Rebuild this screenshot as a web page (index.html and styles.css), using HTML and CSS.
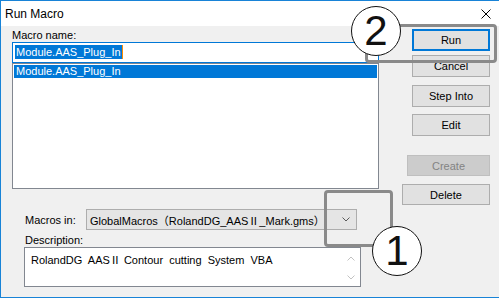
FILE: index.html
```html
<!DOCTYPE html>
<html lang="en">
<head>
    <meta charset="UTF-8">
    <meta name="viewport" content="width=device-width, initial-scale=1.0">
    <title>Run Macro</title>
    <link rel="stylesheet" href="styles.css">
</head>
<body>
    <div class="window">
        <div class="titlebar">
            <span class="title">Run Macro</span>
            <svg class="close" width="10" height="10" viewBox="0 0 10 10">
                <path d="M0.5 0.5 L9.5 9.5 M9.5 0.5 L0.5 9.5" stroke="#000" stroke-width="1" fill="none"/>
            </svg>
        </div>
        <div class="dialog">
            <div class="top">
                <div class="left">
                    <div class="label">Macro name:</div>
                    <div class="name-input"><span class="sel">Module.AAS_Plug_In</span><span class="caret"></span></div>
                    <div class="list">
                        <div class="item">Module.AAS_Plug_In</div>
                    </div>
                </div>
                <div class="buttons">
                    <button class="btn btn-run">Run</button>
                    <button class="btn btn-cancel">Cancel</button>
                    <button class="btn btn-step">Step Into</button>
                    <button class="btn btn-edit">Edit</button>
                    <button class="btn btn-create" disabled>Create</button>
                    <button class="btn btn-delete">Delete</button>
                </div>
            </div>
            <div class="bottom">
                <div class="macros-row">
                    <span class="macros-label">Macros in:</span>
                    <div class="combo">
                        <span class="combo-text">GlobalMacros（RolandDG_AASⅡ_Mark.gms）</span>
                        <svg class="combo-arrow" width="8" height="5" viewBox="0 0 8 5">
                            <path d="M0.5 0.5 L4 4 L7.5 0.5" stroke="#5a5a5a" fill="none"/>
                        </svg>
                    </div>
                </div>
                <div class="label desc-label">Description:</div>
                <div class="desc">
                    <div class="desc-text">RolandDG  AASⅡ Contour  cutting  System  VBA</div>
                    <div class="scroll">
                        <svg width="8" height="5" viewBox="0 0 8 5"><path d="M0.5 4.5 L4 1 L7.5 4.5" stroke="#c2c2c2" fill="none"/></svg>
                        <svg width="8" height="5" viewBox="0 0 8 5"><path d="M0.5 0.5 L4 4 L7.5 0.5" stroke="#c2c2c2" fill="none"/></svg>
                    </div>
                </div>
            </div>
        </div>

        <!-- annotation marks -->
        <div class="mark-box box-run"></div>
        <div class="mark-box box-combo"></div>
        <div class="circle circle-2">2</div>
        <div class="circle circle-1">1</div>
    </div>
</body>
</html>
```

FILE: styles.css
```css
body {
    margin: 0;
    font-family: "Liberation Sans", Arial, "Noto Sans CJK JP", sans-serif;
    font-size: 11px;
    color: #000;
    background: #fff;
}
.window {
    position: relative;
    width: 498px;
    height: 296px;
    border: 1px solid #1883d7;
    border-right: none;
}
.titlebar {
    height: 25px;
    background: #fff;
    display: flex;
    align-items: center;
    padding: 0 8px 0 4px;
    font-size: 12px;
}
.title {
    flex: 1;
}
.dialog {
    height: 271px;
    box-sizing: border-box;
    background: #f0f0f0;
    padding: 2px 9px 0 11px;
}
.top {
    display: flex;
}
.left {
    width: 367px;
}
.label {
    height: 14px;
    line-height: 14px;
}
.name-input {
    height: 21px;
    box-sizing: border-box;
    border: 1px solid #0078d7;
    background: #fff;
    padding: 2px;
    display: flex;
}
.sel {
    background: #0078d7;
    color: #fff;
    line-height: 14px;
    height: 14px;
    padding: 0 1px;
}
.caret {
    width: 1px;
    height: 14px;
    background: #ff8c00;
}
.list {
    height: 126px;
    box-sizing: border-box;
    border: 1px solid #828790;
    background: #fff;
    padding: 1px;
}
.item {
    background: #0078d7;
    color: #fff;
    line-height: 13px;
    padding-left: 2px;
}
.buttons {
    margin-left: auto;
    display: flex;
    flex-direction: column;
    align-items: flex-end;
}
.btn {
    width: 78px;
    height: 22px;
    box-sizing: border-box;
    border: 1px solid #adadad;
    background: #e1e1e1;
    font: inherit;
    color: #000;
    padding: 0;
}
.btn-run {
    margin-top: 1px;
    border: 2px solid #0078d7;
}
.btn-cancel {
    margin-top: 4px;
}
.btn-step {
    margin-top: 8px;
}
.btn-edit {
    margin-top: 7px;
}
.btn-create {
    margin-top: 19px;
    width: 83px;
    height: 21px;
    background: #cccccc;
    border-color: #bfbfbf;
    color: #838383;
}
.btn-delete {
    margin-top: 8px;
    width: 88px;
    height: 21px;
}
.bottom {
    padding-left: 12px;
}
.macros-row {
    display: flex;
    align-items: center;
    margin-top: 4px;
    height: 21px;
}
.macros-label {
    width: 62px;
    padding-left: 1px;
    box-sizing: border-box;
}
.combo {
    width: 271px;
    height: 21px;
    box-sizing: border-box;
    border: 1px solid #adadad;
    background: #e5e5e5;
    display: flex;
    align-items: center;
    padding: 0 6px 0 3px;
}
.combo-text {
    flex: 1;
    white-space: nowrap;
}
.desc-label {
    margin-top: 3px;
    padding-left: 1px;
}
.desc {
    width: 337px;
    height: 40px;
    box-sizing: border-box;
    border: 1px solid #828790;
    background: #fff;
    display: flex;
}
.desc-text {
    flex: 1;
    padding: 3px 6px;
    white-space: pre;
}
.scroll {
    width: 18px;
    display: flex;
    flex-direction: column;
    justify-content: space-between;
    align-items: center;
    padding: 8px 0 6px;
}
.mark-box {
    position: absolute;
    box-sizing: border-box;
    border: 3px solid #8a8a8a;
    border-radius: 4px;
}
.box-run {
    left: 364px;
    top: 23px;
    width: 132px;
    height: 39px;
}
.box-combo {
    left: 323px;
    top: 189px;
    width: 69px;
    height: 57px;
}
.circle {
    position: absolute;
    width: 50px;
    height: 50px;
    box-sizing: border-box;
    border-radius: 50%;
    border: 1.5px solid #111;
    background: #fff;
    display: flex;
    align-items: center;
    justify-content: center;
    font-size: 42px;
    line-height: 1;
    color: #111;
}
.circle-2 {
    left: 350px;
    top: 5px;
}
.circle-1 {
    left: 371px;
    top: 225px;
}
```
